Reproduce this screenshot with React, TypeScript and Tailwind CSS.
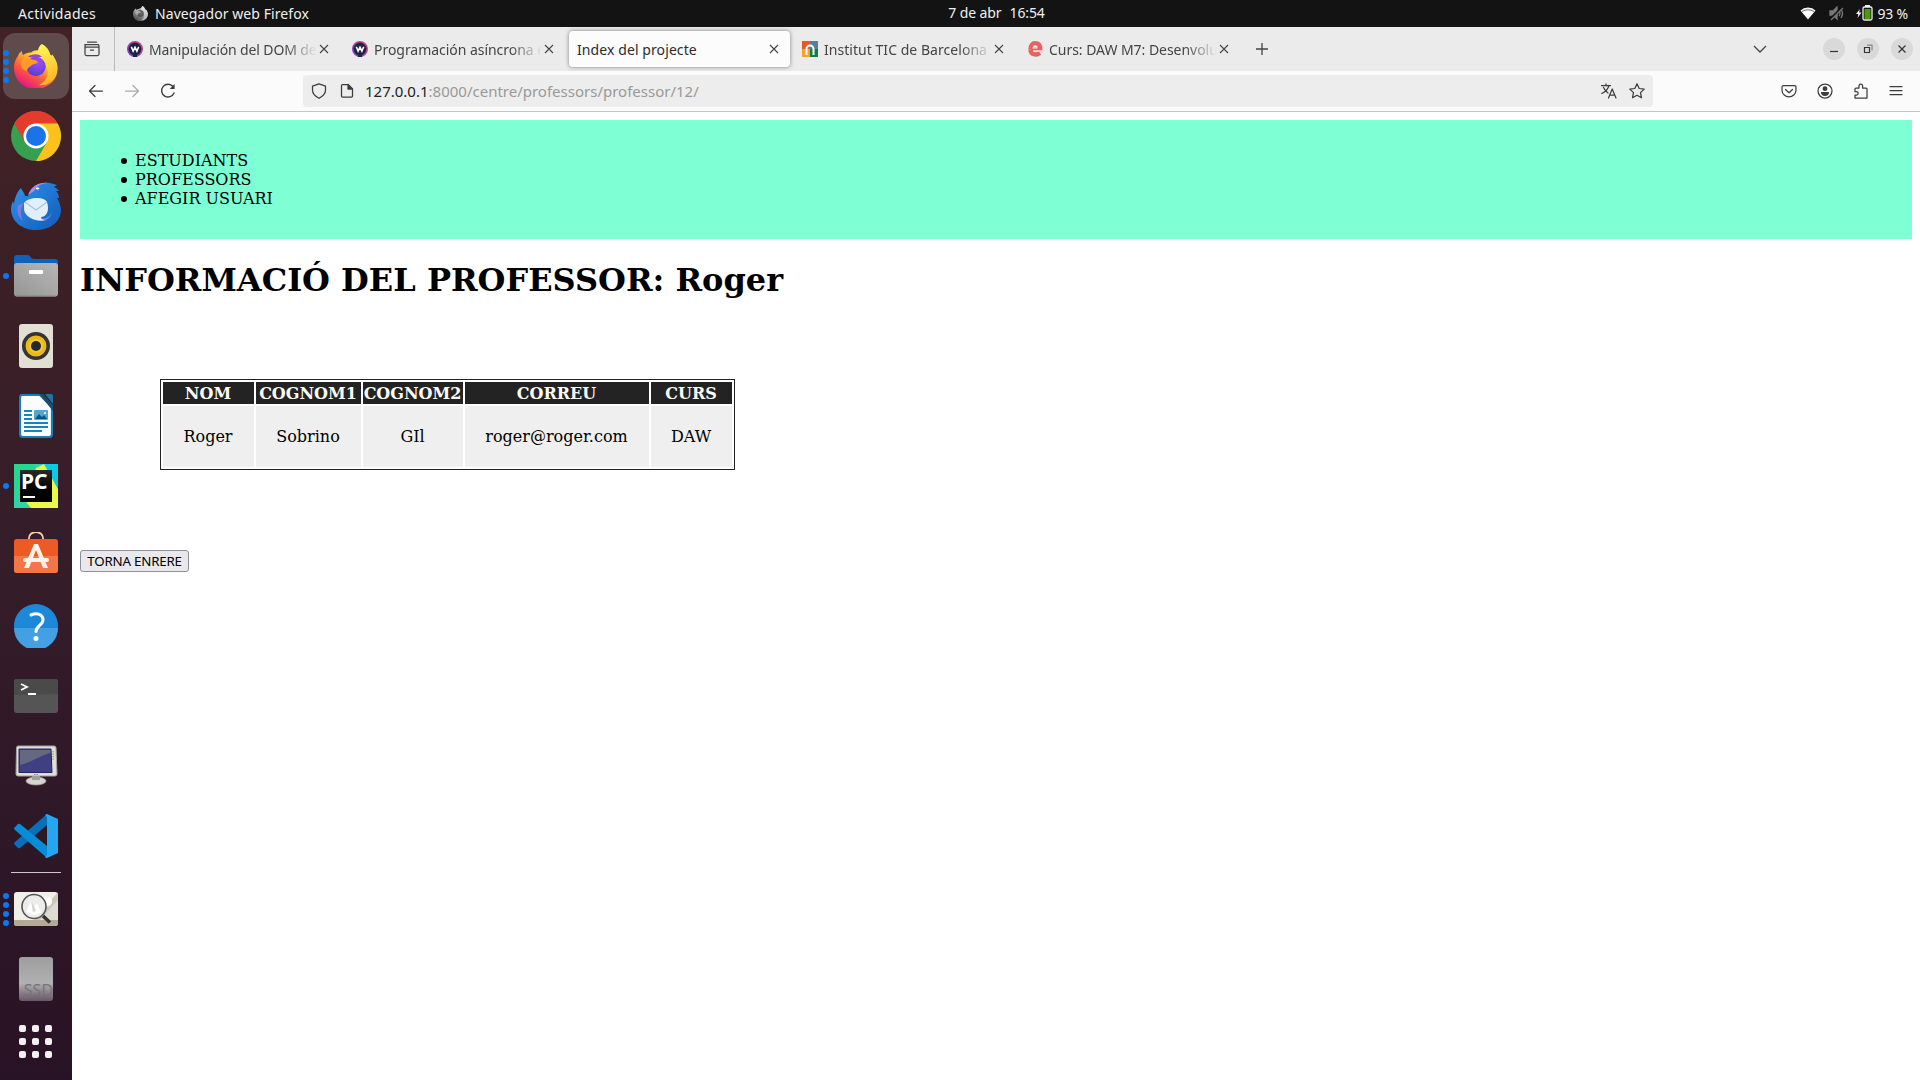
import React from "react";

const ui = "font-['Noto_Sans',sans-serif]";

const Firefox = ({ size = 44, gray = false }: { size?: number; gray?: boolean }) => (
  <svg width={size} height={size} viewBox="0 0 44 44" className={gray ? "grayscale" : ""}>
    <defs>
      <linearGradient id="fxA" x1="0.85" y1="0.1" x2="0.25" y2="0.95">
        <stop offset="0" stopColor="#fff44f" /><stop offset="0.35" stopColor="#ffb02e" />
        <stop offset="0.65" stopColor="#ff5a3c" /><stop offset="1" stopColor="#e31587" />
      </linearGradient>
      <linearGradient id="fxB" x1="0.3" y1="0" x2="0.6" y2="1">
        <stop offset="0" stopColor="#fff95a" /><stop offset="1" stopColor="#ffb526" />
      </linearGradient>
      <radialGradient id="fxC" cx="0.6" cy="0.3" r="0.8">
        <stop offset="0" stopColor="#a14cf5" /><stop offset="1" stopColor="#4a3fd0" />
      </radialGradient>
    </defs>
    <path d="M4 12C5 9 6.500 8 8 7c0 2 .5 3 1 4 3-2 6-2.500 8-2.500C21 5 26 6 31 9l8 3c4 5 5 10 4.500 14C43 37 33 45 22 45 9 45 0 36 0 24c0-5 1-8 4-12z" fill="url(#fxA)" />
    <path d="M28 0c7 4 8 9 9 13 1-1 1-2 1-3 6 8 7 19 1 26-4 4-9 6-14 5 8-4 11-11 7-19-2-4-5-7-8-9-5-2-8-3-9-3 3 0 8-2 9-3 0-3 2-6 4-7z" fill="url(#fxB)" />
    <circle cx="22" cy="22.500" r="9.700" fill="url(#fxC)" />
    <path d="M7 17c4-3 9-2 14-1 2 1 3 2 3 3-3 1-6 1-7 3-3 1-4 3-4 5-5-1-7-5-6-10z" fill="#ff9a26" />
    <path d="M14 13c3-3 10-4 14 0-3 0-5 0-6 1z" fill="#a03fd0" />
  </svg>
);

const Chrome = () => (
  <svg width="50" height="50" viewBox="0 0 50 50">
    <circle cx="25" cy="25" r="25" fill="#34a050" />
    <path d="M3.350 12.500A25 25 0 0 1 46.650 12.500L25 12.500 14.200 31.200z" fill="#e33b2e" />
    <path d="M46.650 12.500A25 25 0 0 1 25 50L36 31 25 12.500z" fill="#fcc21b" />
    <circle cx="25" cy="25" r="12.500" fill="#fff" /><circle cx="25" cy="25" r="10" fill="#1a73e8" />
  </svg>
);

const Thunderbird = () => (
  <svg width="50" height="50" viewBox="0 0 50 50">
    <defs><linearGradient id="tb" x1="0" y1="0" x2="1" y2="1"><stop stopColor="#2f95ee" /><stop offset="1" stopColor="#1259b8" /></linearGradient></defs>
    <path d="M17 15C20 5 29 1 39 2c2 1 5 1 7 2l-3 2c2 1 4 2 5 4l-3 0c3 3 3 6 3 7h-2c3 5 4 9 4 13-1 12-12 19-25 19C11 49 1 41 0 29c0-4 1-7 2-9l1 3c1-7 3-12 7-16 1 3 4 5 4 8z" fill="url(#tb)" />
    <path d="M17 14C21 4 29 1 37 2c-7 0-12 4-14 8z" fill="#b18be8" />
    <path d="M7 24c-2 6 0 12 5 16-3-6-3-13 1-18z" fill="#8078df" />
    <path d="M30 38c6 0 10-3 11-8-1 8-8 12-15 9z" fill="#7c83e9" />
    <path d="M13 22c4-6 20-7 23-1 3 9-1 15-6 15 0 2 2 3 4 3-6 2-19-1-21-10z" fill="#e1effb" />
    <path d="M14 21l11 8 11-8" fill="none" stroke="#a9c4dd" strokeWidth="1.200" />
    <ellipse cx="26.500" cy="7.500" rx="1.800" ry="1" fill="#fff" />
  </svg>
);

const Files = () => (
  <svg width="44" height="42" viewBox="0 0 44 42">
    <defs><linearGradient id="fl" x1="0" y1="1" x2="1" y2="0"><stop stopColor="#969696" /><stop offset="1" stopColor="#b6b6b6" /></linearGradient></defs>
    <path d="M0 3q0-3 3-3h11c2 0 3 4 6 4h21q3 0 3 3v10H0z" fill="#0b63bf" />
    <rect y="8" width="44" height="33.500" rx="3" fill="url(#fl)" /><path d="M2 41h40" stroke="#858585" />
    <rect x="15" y="15" width="14" height="4" rx="1" fill="#fff" />
  </svg>
);

const Rhythmbox = () => (
  <svg width="34" height="44" viewBox="0 0 34 44">
    <rect width="34" height="44" rx="3" fill="#e2dfd3" /><circle cx="17" cy="22" r="14" fill="#343434" />
    <circle cx="17" cy="22" r="10.500" fill="#eaba16" /><circle cx="17" cy="22" r="7" fill="#f2c634" /><circle cx="17" cy="22" r="5" fill="#242a2c" />
  </svg>
);

const Writer = () => (
  <svg width="34" height="44" viewBox="0 0 34 44">
    <path d="M3 1h18l12 12v27q0 3-3 3H4q-3 0-3-3V4q0-3 2-3z" fill="#fcfdfe" stroke="#1a7fb9" strokeWidth="2.200" />
    <path d="M20 0h4l10 11v6z" fill="#15506f" /><path d="M26 0h6q2 0 2 2v8z" fill="#1976aa" />
    <path d="M5 17h8M5 21h8M5 25h8M5 29h24M5 33h24M5 37h18" stroke="#1784c2" strokeWidth="2" />
    <rect x="15" y="16" width="14" height="10" rx="1" fill="#51a6d5" /><path d="M16 25l4-5 3 3 2-2 3 4z" fill="#075885" /><circle cx="26" cy="19" r="1" fill="#fff" />
  </svg>
);

const PyCharm = () => (
  <div className="relative flex h-11 w-11 items-center justify-center">
    <svg className="absolute inset-0" width="44" height="44" viewBox="0 0 44 44">
      <defs><linearGradient id="pc" x1="0" y1="0" x2="0.6" y2="1"><stop stopColor="#22d88f" /><stop offset="1" stopColor="#35d3a5" /></linearGradient></defs>
      <rect width="44" height="44" fill="url(#pc)" /><path d="M26 0h18v24L32 10z" fill="#0bcbe4" />
      <path d="M22 4l8-4 14 25v19H17L12 38z" fill="#ecf94a" /><path d="M31 0h13v25z" fill="#0bcbe4" />
    </svg>
    <div className={`relative h-8 w-8 bg-[#0c0c0c] bg-linear-to-b from-[#2a2a2a] to-black ${ui}`}>
      <span className="block pl-[1px] text-[21px] leading-[22px] font-bold tracking-[0px] text-white">PC</span>
      <span className="absolute bottom-1 left-[3px] h-[2px] w-3 bg-white" />
    </div>
  </div>
);

const Software = () => (
  <svg width="44" height="42" viewBox="0 0 44 42">
    <path d="M15 10V6a7 6 0 0 1 14 0v4" fill="none" stroke="#f3d1a4" strokeWidth="1.800" />
    <rect y="7" width="44" height="34" rx="3" fill="#ee5a24" /><path d="M0 24h44v14q0 3-3 3H3q-3 0-3-3z" fill="#f27647" />
    <path d="M20 12h4l10 24h-5l-7-18-7 18h-5z" fill="#fff2ea" /><rect x="9" y="26" width="26" height="4" rx="2" fill="#fff2ea" />
  </svg>
);

const Help = () => (
  <svg width="44" height="44" viewBox="0 0 44 44">
    <circle cx="22" cy="22" r="22" fill="#1e88d8" /><path d="M0 24h44a22 22 0 0 1-44 0z" fill="#43a1e3" />
    <path d="M17 11c6-2.500 12-1 12 5 0 5-7 6-7 11.500" fill="none" stroke="#fff" strokeWidth="3" strokeLinecap="round" /><circle cx="22" cy="34.500" r="2.500" fill="#fff" />
  </svg>
);

const Terminal = () => (
  <svg width="44" height="34" viewBox="0 0 44 34">
    <rect width="44" height="34" rx="3" fill="#555" /><path d="M0 16V3q0-3 3-3h38q3 0 3 3v12z" fill="#4a4a4a" />
    <path d="M7 5l6 3-6 3M14 15h8" fill="none" stroke="#fff" strokeWidth="1.800" />
  </svg>
);

const Monitor = () => (
  <svg width="44" height="42" viewBox="0 0 44 42">
    <ellipse cx="22" cy="36" rx="10" ry="4" fill="#d5d5cf" stroke="#9c9c98" strokeWidth=".7" /><path d="M18 30h8v5h-8z" fill="#a0a09b" />
    <path d="M4 1h36q2 0 2 2l1 26q0 2-2 2H4q-2 0-2-2L2.500 3q0-2 1.500-2z" fill="#dedfd6" stroke="#a2a29c" />
    <path d="M5 4h32l1 23.500H5z" fill="#3f4081" stroke="#25255f" /><path d="M6 5h30.500v3C27 10 18 17 6 20z" fill="#747581" opacity=".75" />
    <path d="M39 6v10M20 29.500h4" stroke="#898983" strokeDasharray="1.500 1" />
  </svg>
);

const VSCode = () => (
  <svg width="44" height="44" viewBox="0 0 44 44">
    <path d="M0 30l4 4q1 .5 2 0L33 11V0L1 28q-1 1-1 2z" fill="#0870bb" />
    <path d="M0 14l4-4q1-.5 2 0l27 22v12L1 16q-1-1-1-2z" fill="#078dd7" />
    <path d="M33 0l11 5v34l-11 5q-1 0-2-1l2-2V3l-2-2z" fill="#25a6f1" />
  </svg>
);

const ImageViewer = () => (
  <svg width="44" height="34" viewBox="0 0 44 34">
    <defs><clipPath id="ivc"><rect width="44" height="34" rx="3" /></clipPath></defs>
    <g clipPath="url(#ivc)">
      <rect width="44" height="34" fill="#f0f0e9" /><path d="M44 0L20 28h24z" fill="#cbc8ba" /><path d="M44 8L26 28h18z" fill="#dedcd2" />
      <path d="M0 28h44v6H0z" fill="#b3ab98" /><circle cx="33" cy="9.500" r="5" fill="#fff" />
    </g>
    <circle cx="20" cy="14.500" r="12" fill="#ececea" stroke="#555" strokeWidth="1.600" />
    <path d="M12 20l5-11 3 5 3-3 4 9q-7 6-15 0z" fill="#fff" /><path d="M17 9l3 5 2 5-3 1z" fill="#d4d4d0" />
    <path d="M29 24l7 6.500" stroke="#333" strokeWidth="3.500" />
  </svg>
);

const Ssd = () => (
  <div className="flex h-11 w-[34px] items-end justify-end overflow-hidden rounded-[3px] bg-linear-to-b from-[#9e9e9e] via-[#b0b0b0] via-60% to-[#67576a]">
    <span className="mb-[2px] font-['Open_Sans',sans-serif] text-[16px] leading-[18px] tracking-[0px] text-[#757176]">SSD</span>
  </div>
);

const dock: { el: React.ReactNode; dots?: number; active?: boolean }[] = [
  { el: <div className="-mt-px"><Firefox /></div>, dots: 4, active: true },
  { el: <Chrome /> },
  { el: <Thunderbird /> },
  { el: <Files />, dots: 1 },
  { el: <Rhythmbox /> },
  { el: <Writer /> },
  { el: <PyCharm />, dots: 1 },
  { el: <div className="-mt-1.5"><Software /></div> },
  { el: <Help /> },
  { el: <Terminal /> },
  { el: <div className="-mt-px"><Monitor /></div> },
  { el: <VSCode /> },
];

const DockItem = ({ el, dots = 0, active }: { el: React.ReactNode; dots?: number; active?: boolean }) => (
  <div className={`relative flex h-[66px] w-[66px] shrink-0 items-center justify-center rounded-xl ${active ? "bg-[#5f4a4c]" : ""}`}>
    {el}
    <div className="absolute inset-y-0 left-0 flex flex-col justify-center gap-[3px]">
      {Array.from({ length: dots }, (_, i) => <i key={i} className="h-1.5 w-1.5 rounded-full bg-[#0a78f0]" />)}
    </div>
  </div>
);

const Dock = () => (
  <aside className="flex w-[72px] shrink-0 flex-col items-center gap-1 bg-linear-to-b from-[#422224] via-[#351d29] via-50% to-[#281225] pt-1.5">
    {dock.map((d, i) => <DockItem key={i} {...d} />)}
    <div className="mt-[-1px] mb-[-1px] h-px w-[50px] shrink-0 bg-[#cfc8cc]" />
    <DockItem el={<ImageViewer />} dots={4} />
    <DockItem el={<Ssd />} />
    <div className="mt-[9px] mr-px grid grid-cols-3 gap-[6px]">
      {Array.from({ length: 9 }, (_, i) => <i key={i} className="h-[7px] w-[7px] rounded-[2px] bg-[#f2f0f1]" />)}
    </div>
  </aside>
);

const Wfav = () => (
  <svg width="16" height="16" viewBox="0 0 16 16" className="shrink-0">
    <defs><linearGradient id="wf" x1="0" y1="1" x2="1" y2="0"><stop stopColor="#6b42d0" /><stop offset="1" stopColor="#e0417f" /></linearGradient></defs>
    <circle cx="8" cy="8" r="7.200" fill="#1c2340" stroke="url(#wf)" strokeWidth="1.600" />
    <path d="M6 12h4v4H6z" fill="#1c2340" />
    <path d="M4.300 5.800l1.800 4.200L8 6.300 9.900 10l1.800-4.200" fill="none" stroke="#fff" strokeWidth="1.600" />
  </svg>
);
const Nfav = () => (
  <svg width="16" height="16" viewBox="0 0 16 16" className="shrink-0">
    <path d="M0 0h8v8H0z" fill="#e9562b" /><path d="M8 0h8v8H8z" fill="#557f9c" /><path d="M0 8h8v8H0z" fill="#f0a42c" /><path d="M8 8h8v8H8z" fill="#137c4a" />
    <path d="M4.500 14V8a3.500 3.500 0 0 1 7 0v6" fill="none" stroke="#fff" strokeWidth="2" />
  </svg>
);
const Efav = () => (
  <svg width="16" height="16" viewBox="0 0 16 16" className="shrink-0">
    <path d="M8 2.200c3.300 0 5.300 2.200 5.300 6H4.500M3.500 8.500c0 5.500 6 6 9.500 3.500M3.500 8.300c0-4 2-6.100 4.500-6.100" fill="none" stroke="#e8605f" strokeWidth="4.300" />
    <path d="M5.500 6.800h5M6 9.800h10" stroke="#fbeaea" strokeWidth="1.300" />
  </svg>
);

const Cross = () => (
  <svg width="10" height="10" viewBox="0 0 10 10" className="shrink-0"><path d="M1 1l8 8M9 1L1 9" stroke="#444" strokeWidth="1.100" /></svg>
);

const tabs = [
  { icon: <Wfav />, text: "Manipulación del DOM de", cls: "tracking-[-0.120px]" },
  { icon: <Wfav />, text: "Programación asíncrona e", cls: "tracking-[-0.040px]" },
  { text: "Index del projecte", cls: "tracking-[0.090px]", active: true },
  { icon: <Nfav />, text: "Institut TIC de Barcelona", cls: "tracking-[0.040px]" },
  { icon: <Efav />, text: "Curs: DAW M7: Desenvolup", cls: "tracking-[-0.040px]" },
];

const Icon = ({ children, s = 16 }: { children: React.ReactNode; s?: number }) => (
  <svg width={s} height={s} viewBox="0 0 16 16" fill="none" stroke="currentColor" strokeWidth="1.250" strokeLinejoin="round" strokeLinecap="round" className="shrink-0">{children}</svg>
);

const WinBtn = ({ children }: { children: React.ReactNode }) => (
  <span className="flex h-[22px] w-[22px] items-center justify-center rounded-full bg-[#d9d9d9]">
    <svg width="10" height="10" viewBox="0 0 10 10" fill="none" stroke="#333" strokeWidth="1.200">{children}</svg>
  </span>
);

const cols = "grid grid-cols-[91px_105px_100px_184px_81px] gap-[2px] text-center";

export default function App() {
  return (
    <div className={`flex h-[1080px] w-[1920px] flex-col overflow-hidden bg-white ${ui}`}>
      <header className="grid h-[27px] shrink-0 grid-cols-[1fr_auto_1fr] items-center bg-[#131313] text-[14px] text-[#f0f0f0]">
        <div className="flex items-center pl-[18px]">
          <span className="w-[115px] tracking-[0.300px]">Actividades</span>
          <Firefox size={15} gray />
          <span className="pl-[7px] tracking-[0.080px]">Navegador web Firefox</span>
        </div>
        <div className="-mt-0.5 ml-[73px] flex gap-2 tracking-[-0.100px]"><span>7 de abr</span><span>16:54</span></div>
        <div className="flex items-center justify-end pr-[12px]">
          <svg width="16" height="13" viewBox="0 0 16 13" className="mr-[13px]"><path d="M.5 3.500a11 11 0 0 1 15 0L8 12.500z" fill="#fff" /><path d="M2 4.500q6-3.500 12 0" stroke="#444" strokeWidth=".8" fill="none" /></svg>
          <svg width="16" height="15" viewBox="0 0 16 15" className="mr-[11px]" fill="none" stroke="#777" strokeWidth="1.300"><path d="M1 5h3l4-4v12l-4-4H1z" fill="#777" /><path d="M10 5q2 2.500 0 5M12 3q3 4.500 0 9" /><path d="M1.500 13L13 1.500" stroke="#131313" strokeWidth="2.400" /><path d="M2 14L14 2" /></svg>
          <svg width="17" height="16" viewBox="0 0 17 16" className="mr-[5px] -mt-0.5"><path d="M4 4L0 9h2.500L1.500 13l4-5.500H3z" fill="#fff" /><rect x="7" y="2" width="9" height="13" rx="1.500" fill="none" stroke="#eee" strokeWidth="1.300" /><path d="M9 0h5v2H9z" fill="#eee" /><path d="M8.500 4h6v10h-6z" fill="#4e9a06" /></svg>
          <span className="tracking-[-0.200px]">93 %</span>
        </div>
      </header>

      <div className="flex min-h-0 flex-1">
        <Dock />
        <main className="flex min-w-0 flex-1 flex-col">
          <div className="flex h-11 shrink-0 items-center bg-[#ebebeb] text-[#444]">
            <div className="flex h-full w-[43px] items-center justify-center border-r border-[#bbb] pr-[3px]">
              <Icon><path d="M3.500 1h9M1 3.500q-.5 0 0 0h13.500M1 6h14v7q0 1.500-1.500 1.500h-11Q1 14.500 1 13zM1 6V5q0-1.500 1.500-1.500h11Q15 3.500 15 5v1M6.500 9h3" /></Icon>
            </div>
            <div className="ml-1 flex gap-1">
              {tabs.map((t, i) => (
                <div key={i} className={`flex h-9 w-[221px] items-center pr-[11px] pl-2 text-[14px] ${t.active ? "rounded bg-[#fcfcfc] text-[#2c2c2c] shadow-[0_0_4px_rgba(0,0,0,0.450)]" : ""}`}>
                  {t.icon && <span className="mr-[6px]">{t.icon}</span>}
                  <span className={`min-w-0 flex-1 overflow-hidden whitespace-nowrap ${t.cls} ${t.active ? "" : "mr-[2px] [mask-image:linear-gradient(to_left,transparent,black_32px)]"}`}>{t.text}</span>
                  <Cross />
                </div>
              ))}
            </div>
            <svg width="12" height="12" viewBox="0 0 12 12" className="ml-4"><path d="M6 0v12M0 6h12" stroke="#444" strokeWidth="1.300" /></svg>
            <div className="ml-auto flex items-center pr-[7px]">
              <svg width="14" height="8" viewBox="0 0 14 8" className="mr-[56px]"><path d="M1 1l6 6 6-6" fill="none" stroke="#444" strokeWidth="1.300" /></svg>
              <div className="flex gap-3">
                <WinBtn><path d="M1 7.500h8" /></WinBtn>
                <WinBtn><path d="M1.500 3.500h5v5h-5z" /><path d="M4 1.200h5V6.500" stroke="#888" /></WinBtn>
                <WinBtn><path d="M1.500 1.500l7 7M8.500 1.500l-7 7" /></WinBtn>
              </div>
            </div>
          </div>

          <div className="flex h-[41px] shrink-0 items-center border-b border-[#c4c4c4] bg-[#fbfbfb] text-[#3d3d3d]">
            <div className="flex w-[231px] gap-[20px] pl-4">
              <Icon><path d="M14.500 8H1.500M7 2.500L1.500 8 7 13.500" /></Icon>
              <span className="text-[#aaa]"><Icon><path d="M1.500 8h13M9 2.500L14.500 8 9 13.500" /></Icon></span>
              <Icon><path d="M14 10a6.400 6.400 0 1 1-1-6.500" strokeWidth="1.400" /><path d="M14.600 1v5h-5z" fill="currentColor" stroke="none" /></Icon>
            </div>
            <div className="flex h-8 w-[1350px] items-center rounded bg-[#ededed] px-2">
              <Icon><path d="M8 .8l6.500 2.300v4.200c0 3.700-2.700 6-6.500 8-3.800-2-6.500-4.300-6.500-8V3.100z" /></Icon>
              <span className="ml-3"><Icon><path d="M3.500 1.500H9L13.500 6v7q0 1-1 1h-9q-1 0-1-1v-10.500q0-1 1-1z" /><path d="M9 1.500V6h4.500z" fill="currentColor" /></Icon></span>
              <span className="ml-[10px] text-[15px] tracking-[0px] text-[#999]"><span className="text-[#222]">127.0.0.1</span>:8000/centre/professors/professor/12/</span>
              <span className="ml-auto mr-3"><Icon><path d="M.5 2.500h9M5 .8v1.700M8 2.500C7 6 4 9 .8 10.500M2.500 4.500C4 7.500 5.500 9 7 10M7.500 15l3.700-9 3.800 9M9 12h4.500" /></Icon></span>
              <Icon><path d="M8 .8l2.200 4.700 5 .6-3.700 3.500 1 5.200L8 12.300l-4.500 2.500 1-5.200L.8 6.100l5-.6z" /></Icon>
            </div>
            <div className="ml-auto flex gap-[20px] pr-4">
              <Icon><path d="M2.500 2.500h11q1.500 0 1.500 1.500v3c0 9-14 9-14 0V4q0-1.500 1.500-1.500zM4.500 6.500L8 9.700l3.500-3.200" /></Icon>
              <Icon><circle cx="8" cy="8" r="7" /><circle cx="8" cy="5.700" r="2.400" fill="currentColor" stroke="none" /><path d="M4 9h8q0 4-4 4T4 9z" fill="currentColor" stroke="none" /></Icon>
              <Icon><path d="M2 6q0-1 1-1h3V3q0-2 1.800-2t1.800 2v2H13q1 0 1 1v9H2v-3h1.500a1.600 1.600 0 0 0 0-3.300H2z" /></Icon>
              <span className="-ml-px"><Icon><path d="M2 3.500h12M2 7.500h12M2 11.500h12" /></Icon></span>
            </div>
          </div>

          <div className="flex flex-col p-2 font-['DejaVu_Serif',serif] text-[16px] text-black">
            <nav className="h-[119px] bg-[#7fffd4] pt-[31px]">
              <ul className="pl-[41px] leading-[19px]">
                {["ESTUDIANTS", "PROFESSORS", "AFEGIR USUARI"].map((t) => (
                  <li key={t} className="flex items-center gap-2 before:mt-px before:h-1.5 before:w-1.5 before:rounded-full before:bg-black">{t}</li>
                ))}
              </ul>
            </nav>
            <h1 className="mt-[22px] h-[38px] text-[32px] leading-[38px] font-bold">INFORMACIÓ DEL PROFESSOR: Roger</h1>
            <div className="mt-[80px] ml-20 flex w-[575px] flex-col gap-[2px] border border-[#232323] p-[2px]">
              <div className={`${cols} font-bold text-[#fbfbf6]`}>
                {["NOM", "COGNOM1", "COGNOM2", "CORREU", "CURS"].map((h) => <div key={h} className="h-[22px] bg-[#232323] pr-px leading-[24px]">{h}</div>)}
              </div>
              <div className={cols}>
                {["Roger", "Sobrino", "GIl", "roger@roger.com", "DAW"].map((h) => <div key={h} className="h-[61px] bg-[#efefef] pr-px leading-[61px]">{h}</div>)}
              </div>
            </div>
            <button className={`mt-20 h-[22px] w-[109px] rounded-[3px] border border-[#8f8f9d] bg-[#e9e9ed] text-[13.333px] leading-5 tracking-[-0.200px] whitespace-nowrap ${ui}`}>TORNA ENRERE</button>
          </div>
        </main>
      </div>
    </div>
  );
}
